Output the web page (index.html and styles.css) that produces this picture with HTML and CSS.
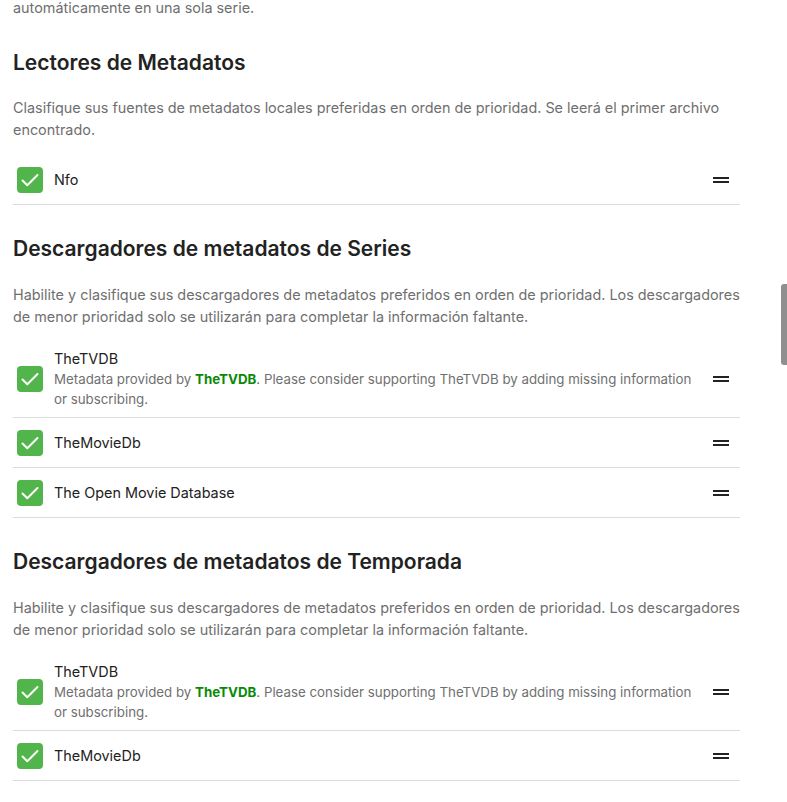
FILE: index.html
```html
<!DOCTYPE html>
<html lang="es">
<head>
<meta charset="utf-8">
<title>Metadatos</title>
<link rel="stylesheet" href="styles.css">
</head>
<body>
<div class="page">
  <p class="desc lead">automáticamente en una sola serie.</p>

  <section class="section">
    <h2 class="heading">Lectores de Metadatos</h2>
    <p class="desc">Clasifique sus fuentes de metadatos locales preferidas en orden de prioridad. Se leerá el primer archivo encontrado.</p>
    <div class="list">
      <div class="row">
        <span class="check"><svg viewBox="0 0 26 26" width="26" height="26"><path d="M5.5 13.5l4.8 4.8L20.5 8" fill="none" stroke="#fff" stroke-width="2" stroke-linecap="round" stroke-linejoin="round"/></svg></span>
        <div class="body"><div class="title">Nfo</div></div>
        <span class="handle"><svg viewBox="0 0 24 24" width="24" height="24"><path d="M20 9H4v2h16V9zM4 15h16v-2H4v2z" fill="#222"/></svg></span>
      </div>
    </div>
  </section>

  <section class="section">
    <h2 class="heading">Descargadores de metadatos de Series</h2>
    <p class="desc">Habilite y clasifique sus descargadores de metadatos preferidos en orden de prioridad. Los descargadores de menor prioridad solo se utilizarán para completar la información faltante.</p>
    <div class="list">
      <div class="row multi">
        <span class="check"><svg viewBox="0 0 26 26" width="26" height="26"><path d="M5.5 13.5l4.8 4.8L20.5 8" fill="none" stroke="#fff" stroke-width="2" stroke-linecap="round" stroke-linejoin="round"/></svg></span>
        <div class="body">
          <div class="title">TheTVDB</div>
          <div class="sub">Metadata provided by <a class="link">TheTVDB</a>. Please consider supporting TheTVDB by adding missing information or subscribing.</div>
        </div>
        <span class="handle"><svg viewBox="0 0 24 24" width="24" height="24"><path d="M20 9H4v2h16V9zM4 15h16v-2H4v2z" fill="#222"/></svg></span>
      </div>
      <div class="row">
        <span class="check"><svg viewBox="0 0 26 26" width="26" height="26"><path d="M5.5 13.5l4.8 4.8L20.5 8" fill="none" stroke="#fff" stroke-width="2" stroke-linecap="round" stroke-linejoin="round"/></svg></span>
        <div class="body"><div class="title">TheMovieDb</div></div>
        <span class="handle"><svg viewBox="0 0 24 24" width="24" height="24"><path d="M20 9H4v2h16V9zM4 15h16v-2H4v2z" fill="#222"/></svg></span>
      </div>
      <div class="row">
        <span class="check"><svg viewBox="0 0 26 26" width="26" height="26"><path d="M5.5 13.5l4.8 4.8L20.5 8" fill="none" stroke="#fff" stroke-width="2" stroke-linecap="round" stroke-linejoin="round"/></svg></span>
        <div class="body"><div class="title">The Open Movie Database</div></div>
        <span class="handle"><svg viewBox="0 0 24 24" width="24" height="24"><path d="M20 9H4v2h16V9zM4 15h16v-2H4v2z" fill="#222"/></svg></span>
      </div>
    </div>
  </section>

  <section class="section">
    <h2 class="heading">Descargadores de metadatos de Temporada</h2>
    <p class="desc">Habilite y clasifique sus descargadores de metadatos preferidos en orden de prioridad. Los descargadores de menor prioridad solo se utilizarán para completar la información faltante.</p>
    <div class="list">
      <div class="row multi">
        <span class="check"><svg viewBox="0 0 26 26" width="26" height="26"><path d="M5.5 13.5l4.8 4.8L20.5 8" fill="none" stroke="#fff" stroke-width="2" stroke-linecap="round" stroke-linejoin="round"/></svg></span>
        <div class="body">
          <div class="title">TheTVDB</div>
          <div class="sub">Metadata provided by <a class="link">TheTVDB</a>. Please consider supporting TheTVDB by adding missing information or subscribing.</div>
        </div>
        <span class="handle"><svg viewBox="0 0 24 24" width="24" height="24"><path d="M20 9H4v2h16V9zM4 15h16v-2H4v2z" fill="#222"/></svg></span>
      </div>
      <div class="row">
        <span class="check"><svg viewBox="0 0 26 26" width="26" height="26"><path d="M5.5 13.5l4.8 4.8L20.5 8" fill="none" stroke="#fff" stroke-width="2" stroke-linecap="round" stroke-linejoin="round"/></svg></span>
        <div class="body"><div class="title">TheMovieDb</div></div>
        <span class="handle"><svg viewBox="0 0 24 24" width="24" height="24"><path d="M20 9H4v2h16V9zM4 15h16v-2H4v2z" fill="#222"/></svg></span>
      </div>
    </div>
  </section>
</div>
<div class="scrollthumb"></div>
</body>
</html>
```

FILE: styles.css
```css
html, body {
  margin: 0;
  padding: 0;
  background: #fff;
  overflow: hidden;
}
body {
  font-family: Inter, "Noto Sans", sans-serif;
  color: #222;
}
.page {
  width: 727px;
  padding-left: 13px;
  margin-top: -3px;
}
.desc {
  margin: 0;
  font-size: 14.4px;
  line-height: 22px;
  color: #6f6f6f;
}
.lead {
  margin-bottom: 31px;
}
.section {
  margin-bottom: 31px;
}
.heading {
  margin: 0 0 22px 0;
  font-size: 21px;
  line-height: 25px;
  font-weight: 600;
  color: #222;
}
.section + .section .heading {
  margin-bottom: 23px;
}
.list {
  margin-top: 14px;
}
.section + .section .list {
  margin-top: 15px;
}
.row {
  display: flex;
  align-items: center;
  min-height: 37px;
  padding: 6px 0;
  border-bottom: 1px solid #dcdcdc;
}
.row.multi {
  padding: 5px 0 8px 0;
}
.row.multi .sub {
  margin-top: -1px;
}
.check {
  flex: none;
  width: 26px;
  height: 26px;
  margin-left: 4px;
  margin-right: 11px;
  background: #52b54b;
  border-radius: 4px;
  display: flex;
}
.body {
  flex: 1;
  min-width: 0;
}
.title {
  font-size: 14.4px;
  line-height: 22px;
  color: #222;
}
.sub {
  font-size: 13.3px;
  line-height: 20px;
  color: #707070;
  padding-right: 4px;
}
.link {
  color: #088a08;
  font-weight: 700;
}
.handle {
  flex: none;
  width: 24px;
  height: 24px;
  margin-left: 8px;
  margin-right: 7px;
  display: flex;
}
.scrollthumb {
  position: fixed;
  right: 0;
  top: 284px;
  width: 6px;
  height: 81px;
  background: #8f8f8f;
  border-radius: 3px 0 0 3px;
}
```
